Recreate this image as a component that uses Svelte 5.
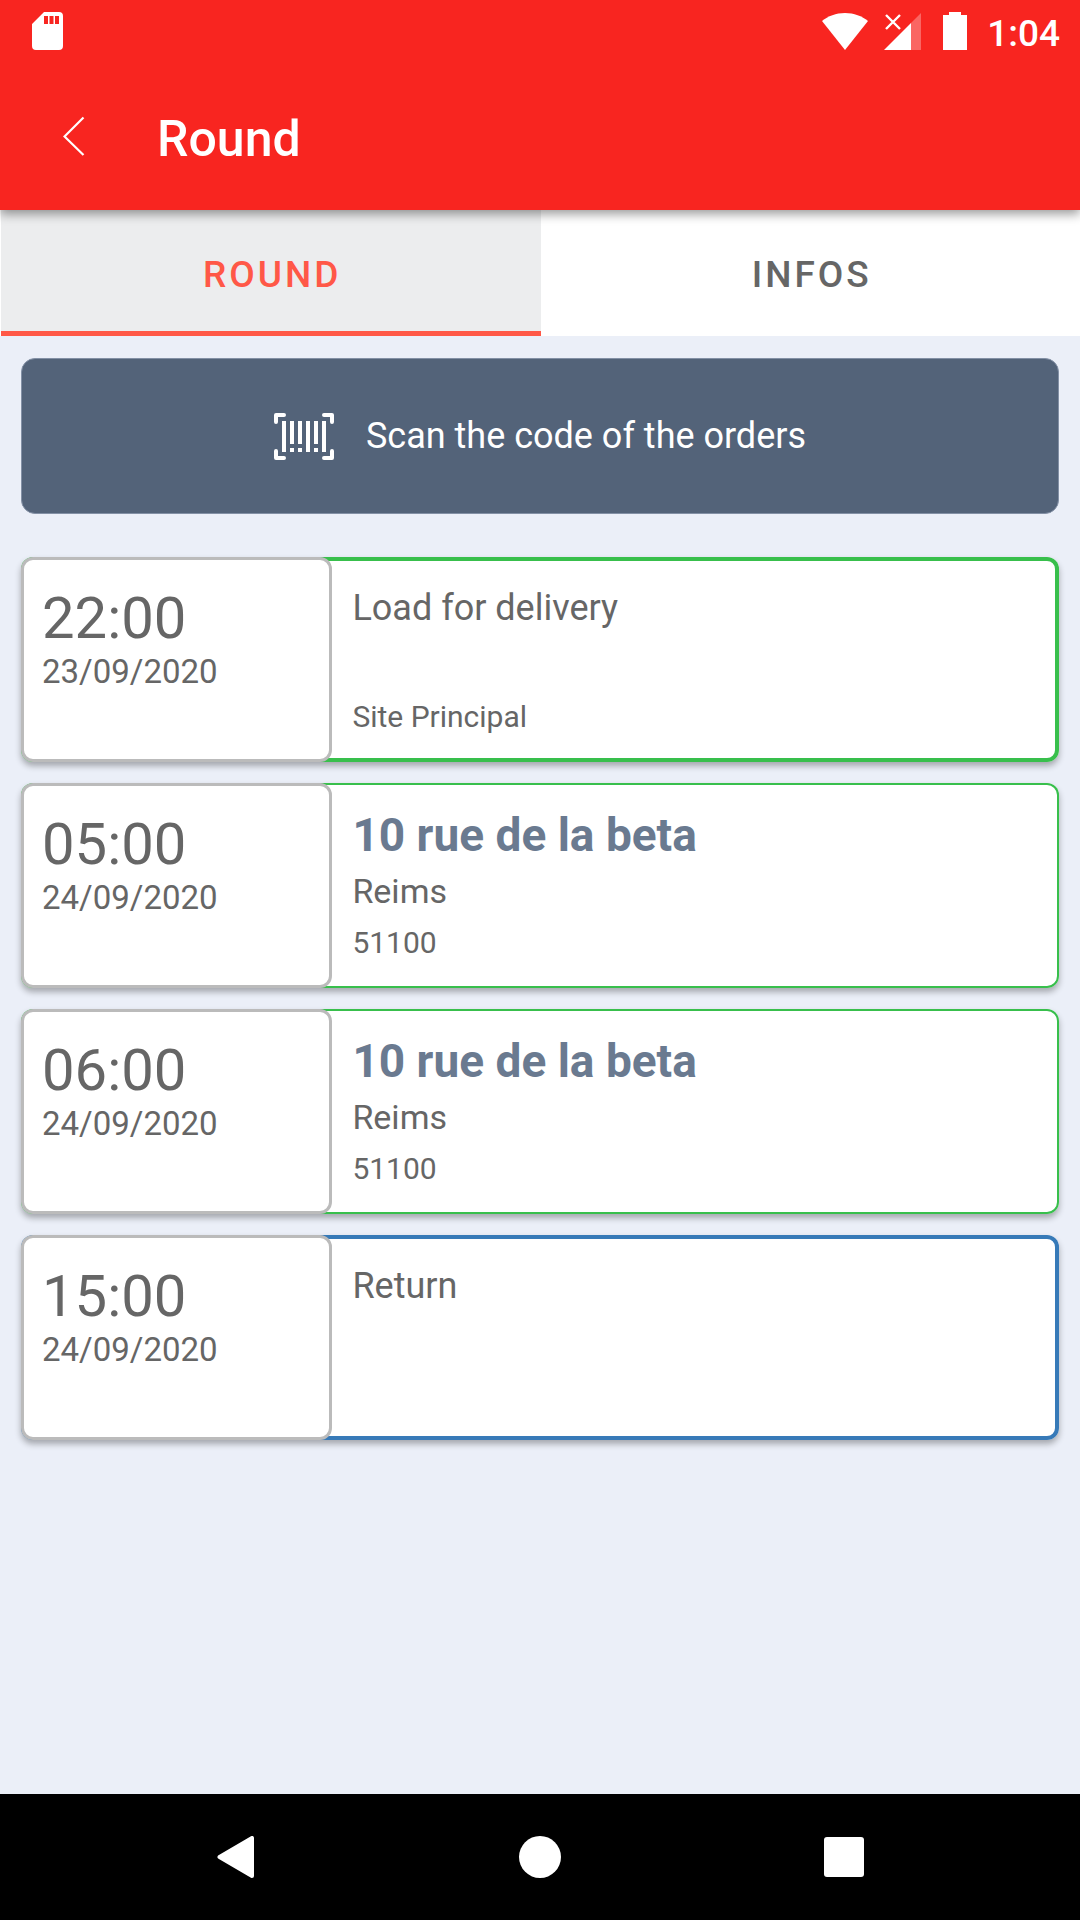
<!--
  @component RoundScreen
  @description Driver's round: scan button plus the ordered list of stops.
-->
<script>
  const tabs = [
    { id: 'round', label: 'ROUND' },
    { id: 'infos', label: 'INFOS' },
  ];

  // kind drives the outline: depot (thick green), drop (thin green), end (blue)
  const stops = [
    { time: '22:00', date: '23/09/2020', kind: 'depot', title: 'Load for delivery', city: '', note: 'Site Principal' },
    { time: '05:00', date: '24/09/2020', kind: 'drop', street: '10 rue de la beta', city: 'Reims', note: '51100' },
    { time: '06:00', date: '24/09/2020', kind: 'drop', street: '10 rue de la beta', city: 'Reims', note: '51100' },
    { time: '15:00', date: '24/09/2020', kind: 'end', title: 'Return', city: '', note: '' },
  ];

  // x offset of each bar; short bars have a dot underneath
  const bars = [
    { x: 8, short: false },
    { x: 16, short: true },
    { x: 24, short: true },
    { x: 32, short: false },
    { x: 40, short: true },
    { x: 48, short: false },
  ];

  let activeTab = $state('round');
</script>

<div class="screen">
  <header class="app-header">
    <div class="status-bar">
      <svg width="31" height="38" viewBox="0 0 31 38" aria-hidden="true">
        <path fill="#fff" fill-rule="evenodd" d="M12 0H27a4 4 0 0 1 4 4V34a4 4 0 0 1-4 4H4a4 4 0 0 1-4-4V12ZM12 4v8h4V4ZM17.500 4v8h4V4ZM23 4v8h4V4Z" />
      </svg>
      <div class="status-right">
        <svg width="46" height="38" viewBox="0 0 46 38" aria-hidden="true">
          <path fill="#fff" d="M23 38 0 9C6 4 14 1 23 1s17 3 23 8Z" />
        </svg>
        <svg width="43" height="38" viewBox="0 0 43 38" aria-hidden="true">
          <path fill="#fff" opacity="0.3" d="M37 1V38H27V11Z" />
          <path fill="#fff" d="M27 11V38H0Z" />
          <path stroke="#fff" stroke-width="2.400" d="M2 3 16 17M16 3 2 17" />
        </svg>
        <svg width="28" height="38" viewBox="0 0 28 38" aria-hidden="true">
          <path fill="#fff" d="M6 0H18V3H24V38H0V3H6Z" />
        </svg>
        <span class="clock">1:04</span>
      </div>
    </div>
    <div class="toolbar">
      <button class="back" type="button" aria-label="Back">
        <svg width="22" height="40" viewBox="0 0 22 40" aria-hidden="true">
          <path fill="none" stroke="#fff" stroke-width="2.200" d="M20.500 1.500 1.500 20.500 20.500 39" />
        </svg>
      </button>
      <h1>Round</h1>
    </div>
  </header>

  <div class="tabs" role="tablist">
    {#each tabs as tab (tab.id)}
      <button
        type="button"
        role="tab"
        class="tab"
        class:active={activeTab === tab.id}
        aria-selected={activeTab === tab.id}
        onclick={() => (activeTab = tab.id)}
      >{tab.label}</button>
    {/each}
  </div>

  <main>
    <button class="scan" type="button">
      <svg width="60" height="47" viewBox="0 0 60 47" aria-hidden="true">
        <path
          fill="none"
          stroke="#fff"
          stroke-width="4"
          stroke-linecap="round"
          stroke-linejoin="round"
          d="M2 9V2H10M50 2H58V9M2 38V45H10M50 45H58V38"
        />
        {#each bars as bar (bar.x)}
          <rect x={bar.x} y="8" width="4" height={bar.short ? 23 : 31} fill="#fff" />
          {#if bar.short}
            <rect x={bar.x} y="35" width="4" height="4" fill="#fff" />
          {/if}
        {/each}
      </svg>
      <span>Scan the code of the orders</span>
    </button>

    <ul class="stops">
      {#each stops as stop (stop.date + stop.time)}
        <li class="stop {stop.kind}">
          <div class="when">
            <span class="time">{stop.time}</span>
            <span class="date">{stop.date}</span>
          </div>
          <div class="where">
            {#if stop.street}
              <strong class="street">{stop.street}</strong>
            {:else}
              <span class="title">{stop.title}</span>
            {/if}
            <span class="city">{stop.city}</span>
            <span class="note">{stop.note}</span>
          </div>
        </li>
      {/each}
    </ul>
  </main>

  <nav class="system-nav" aria-label="System">
    <button type="button" aria-label="Back">
      <svg width="42" height="42" viewBox="0 0 42 42" aria-hidden="true">
        <path fill="#fff" stroke="#fff" stroke-width="4" stroke-linejoin="round" d="M37 2V40L4.500 21Z" />
      </svg>
    </button>
    <button type="button" aria-label="Home">
      <svg width="42" height="42" viewBox="0 0 42 42" aria-hidden="true">
        <circle cx="21" cy="21" r="21" fill="#fff" />
      </svg>
    </button>
    <button type="button" aria-label="Recent apps">
      <svg width="42" height="42" viewBox="0 0 42 42" aria-hidden="true">
        <rect x="1" y="1" width="40" height="40" rx="3" fill="#fff" />
      </svg>
    </button>
  </nav>
</div>

<style>
  :global(body) {
    margin: 0;
    background: #ebeff8;
  }

  .screen {
    min-height: 100vh;
    display: flex;
    flex-direction: column;
    font-family: Roboto, 'Noto Sans', sans-serif;
    color: #666;
  }

  button {
    border: none;
    padding: 0;
    background: none;
    font-family: inherit;
    cursor: pointer;
  }

  svg {
    display: block;
    flex: none;
  }

  .app-header {
    position: relative;
    z-index: 1;
    background: #f82520;
    color: #fff;
    box-shadow: 0 4px 10px rgba(0, 0, 0, 0.4);
  }

  .status-bar {
    height: 62px;
    padding: 0 20px 0 32px;
    display: flex;
    align-items: center;
    justify-content: space-between;
  }

  .status-right {
    display: flex;
    align-items: center;
    gap: 16px;
  }

  .clock {
    padding-top: 5px;
    font-size: 37px;
    line-height: 40px;
    font-weight: 500;
  }

  .toolbar {
    height: 148px;
    display: flex;
    align-items: center;
  }

  .back {
    width: 148px;
    height: 148px;
    display: flex;
    align-items: center;
    justify-content: center;
  }

  h1 {
    margin: 0;
    padding: 5px 0 0 9px;
    font-size: 50px;
    line-height: 60px;
    font-weight: 500;
  }

  .tabs {
    display: grid;
    grid-template-columns: 1fr 1fr;
    padding: 0 0 0 1px;
    background: #fff;
  }

  .tab {
    height: 126px;
    padding: 8px 0 0 3px;
    border-bottom: 5px solid transparent;
    color: #666;
    font-size: 37px;
    font-weight: 500;
    letter-spacing: 3px;
  }

  .tab.active {
    background: #ecedee;
    border-bottom-color: #ff5847;
    color: #ff5847;
  }

  main {
    flex: 1;
    padding: 22px 21px;
    display: flex;
    flex-direction: column;
    gap: 43px;
  }

  .scan {
    height: 156px;
    display: flex;
    align-items: center;
    justify-content: center;
    gap: 32px;
    border: 1px solid #8390a5;
    border-radius: 14px;
    background: #536379;
    color: #fff;
    font-size: 36px;
  }

  .stops {
    list-style: none;
    margin: 0;
    padding: 0;
    display: flex;
    flex-direction: column;
    gap: 21px;
  }

  .stop {
    --outline: #38bf4c;
    --outline-width: 2px;
    min-height: 205px;
    display: grid;
    grid-template-columns: 3fr 7fr;
    border-radius: 12px;
    background: #fff;
    box-shadow:
      inset 0 0 0 var(--outline-width) var(--outline),
      0 4px 6px rgba(0, 0, 0, 0.3);
  }

  .stop.depot {
    --outline-width: 4px;
  }

  .stop.end {
    --outline: #377ab8;
    --outline-width: 4px;
  }

  .when {
    padding: 26px 18px;
    display: flex;
    flex-direction: column;
    border: 3px solid #bbb;
    border-radius: 12px;
    background: #fff;
  }

  .time {
    font-size: 58px;
    line-height: 64px;
  }

  .date {
    font-size: 33px;
    line-height: 44px;
  }

  .where {
    padding: 22px 20px 0;
    display: grid;
    grid-template-rows: 58px 50px 46px;
    row-gap: 3px;
  }

  .title {
    font-size: 36px;
    line-height: 58px;
  }

  .street {
    color: #6a7a90;
    font-size: 46px;
    line-height: 60px;
    font-weight: 700;
  }

  .city {
    font-size: 34px;
    line-height: 50px;
  }

  .note {
    font-size: 30px;
    line-height: 48px;
  }

  .system-nav {
    height: 126px;
    padding: 0 84px;
    display: grid;
    grid-template-columns: repeat(3, 1fr);
    background: #000;
  }

  .system-nav button {
    display: flex;
    align-items: center;
    justify-content: center;
  }
</style>
